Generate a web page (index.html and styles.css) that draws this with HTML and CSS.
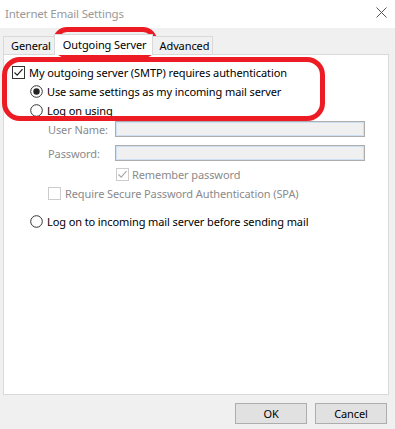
FILE: index.html
```html
<!DOCTYPE html>
<html>
<head>
<meta charset="utf-8">
<link rel="stylesheet" href="styles.css">
</head>
<body>
<div class="window">
  <div class="titlebar">
    <span class="title">Internet Email Settings</span>
    <span class="close">
      <svg width="11" height="11" viewBox="0 0 11 11"><path d="M0.5 0.5 L10.5 10.5 M10.5 0.5 L0.5 10.5" stroke="#555" stroke-width="1" fill="none"/></svg>
    </span>
  </div>
  <div class="tabs">
    <div class="tab">General</div>
    <div class="tab active">Outgoing Server</div>
    <div class="tab">Advanced</div>
  </div>
  <div class="panel">
    <div class="row r-auth">
      <span class="check on">
        <svg width="13" height="13" viewBox="0 0 13 13"><rect x="0.5" y="0.5" width="12" height="12" fill="#fff" stroke="#333"/><path d="M2.5 6.5 L5.2 9.2 L10.5 3.2" stroke="#222" stroke-width="1.2" fill="none"/></svg>
      </span>
      <span class="lbl">My outgoing server (SMTP) requires authentication</span>
    </div>
    <div class="row r-radio">
      <span class="radio">
        <svg width="13" height="13" viewBox="0 0 13 13"><circle cx="6.5" cy="6.5" r="5.8" fill="#fff" stroke="#333"/><circle cx="6.5" cy="6.5" r="3.2" fill="#222"/></svg>
      </span>
      <span class="lbl">Use same settings as my incoming mail server</span>
    </div>
    <div class="row r-radio">
      <span class="radio">
        <svg width="13" height="13" viewBox="0 0 13 13"><circle cx="6.5" cy="6.5" r="5.8" fill="#fff" stroke="#333"/></svg>
      </span>
      <span class="lbl">Log on using</span>
    </div>
    <div class="field-row first">
      <span class="flabel">User Name:</span>
      <span class="field"></span>
    </div>
    <div class="field-row second">
      <span class="flabel">Password:</span>
      <span class="field"></span>
    </div>
    <div class="row r-remember">
      <span class="check">
        <svg width="13" height="13" viewBox="0 0 13 13"><rect x="0.5" y="0.5" width="12" height="12" fill="#fff" stroke="#cccccc"/><path d="M2.5 6.5 L5.2 9.2 L10.5 3.2" stroke="#a8a8a8" stroke-width="1.2" fill="none"/></svg>
      </span>
      <span class="lbl dis">Remember password</span>
    </div>
    <div class="row r-spa">
      <span class="check">
        <svg width="13" height="13" viewBox="0 0 13 13"><rect x="0.5" y="0.5" width="12" height="12" fill="#fff" stroke="#cccccc"/></svg>
      </span>
      <span class="lbl dis">Require Secure Password Authentication (SPA)</span>
    </div>
    <div class="row r-radio r-before">
      <span class="radio">
        <svg width="13" height="13" viewBox="0 0 13 13"><circle cx="6.5" cy="6.5" r="5.8" fill="#fff" stroke="#333"/></svg>
      </span>
      <span class="lbl">Log on to incoming mail server before sending mail</span>
    </div>
  </div>
  <div class="buttons">
    <button class="btn">OK</button>
    <button class="btn">Cancel</button>
  </div>
  <div class="mark mark-tab"></div>
  <div class="mark mark-auth"></div>
</div>
</body>
</html>
```

FILE: styles.css
```css
* { box-sizing: border-box; }
html, body { margin: 0; padding: 0; }
body {
  background: #f0f0f0;
  font-family: "Noto Sans", "Open Sans", sans-serif;
  font-size: 11px;
  letter-spacing: -0.1px;
  color: #000;
  width: 395px;
  height: 429px;
  overflow: hidden;
}
.window {
  position: relative;
  width: 395px;
  height: 429px;
}
.titlebar {
  height: 28px;
  background: #fff;
  display: flex;
  align-items: center;
  justify-content: space-between;
  padding: 0 8px 2px 5px;
}
.title {
  color: #999;
  font-size: 11.5px;
  letter-spacing: -0.2px;
}
.close {
  display: flex;
  margin-top: -2px;
}
.tabs {
  display: flex;
  align-items: flex-end;
  height: 27px;
  padding-left: 3px;
  position: relative;
  z-index: 1;
  margin-bottom: -1px;
}
.tab {
  height: 18px;
  padding: 0 3px 0 7px;
  border: 1px solid #d9d9d9;
  border-bottom: none;
  background: #f0f0f0;
  line-height: 17px;
  margin-bottom: 1px;
}
.tab + .tab { margin-left: -1px; }
.tab.active {
  height: 21px;
  background: #fff;
  margin-bottom: 0;
  padding: 0 5px 0 8px;
  line-height: 19px;
}
.panel {
  margin-left: 3px;
  width: 386px;
  height: 341px;
  background: #fff;
  border: 1px solid #d9d9d9;
  padding-top: 8px;
  padding-left: 4px;
  display: flex;
  flex-direction: column;
}
.row {
  display: flex;
  align-items: center;
  height: 19px;
}
.row .lbl { margin-left: 4px; white-space: nowrap; }
.check, .radio { display: flex; width: 13px; height: 13px; }
.r-auth { padding-left: 4px; }
.r-radio { padding-left: 22px; }
.r-remember { padding-left: 108px; margin-top: 4px; }
.r-remember .lbl { margin-left: 3px; }
.r-spa { padding-left: 40px; }
.r-before { margin-top: 9px; }
.dis { color: #8a8a8a; }
.field-row {
  display: flex;
  align-items: center;
  padding-left: 40px;
  height: 16px;
}
.field-row.first { margin-top: 1px; }
.field-row.second { margin-top: 8px; }
.flabel {
  width: 67px;
  color: #8a8a8a;
}
.field {
  width: 250px;
  height: 16px;
  background: #f0f0f0;
  border: 1px solid #adadad;
  box-shadow: inset 0 0 0 1px #cfe0f4;
}
.buttons {
  display: flex;
  justify-content: flex-end;
  gap: 8px;
  padding-right: 8px;
  margin-top: 8px;
}
.btn {
  width: 72px;
  height: 21px;
  background: #e1e1e1;
  border: 1px solid #adadad;
  font-family: inherit;
  font-size: 11px;
  letter-spacing: -0.1px;
  color: #000;
  padding: 0;
  line-height: 17px;
}
.mark {
  position: absolute;
  border: 5px solid #ed1c24;
  pointer-events: none;
}
.mark-tab {
  left: 53px;
  top: 27px;
  width: 104px;
  height: 31px;
  border-radius: 14px;
}
.mark-auth {
  left: 2px;
  top: 57px;
  width: 323px;
  height: 64px;
  border-radius: 18px;
}
```
